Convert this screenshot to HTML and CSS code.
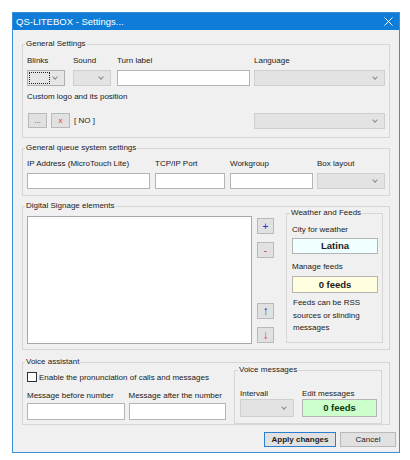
FILE: index.html
```html
<!DOCTYPE html>
<html lang="en">
<head>
    <meta charset="UTF-8">
    <title>QS-LITEBOX - Settings...</title>
    <link rel="stylesheet" href="styles.css">
</head>
<body>
    <div class="window">
        <div class="titlebar">
            <span class="title">QS-LITEBOX - Settings...</span>
            <svg class="close" width="9" height="9" viewBox="0 0 9 9">
                <path d="M0.5 0.5 L8.5 8.5 M8.5 0.5 L0.5 8.5" stroke="#fff" stroke-width="1"/>
            </svg>
        </div>

        <div class="client">
            <fieldset class="group g-general">
                <legend>General Settings</legend>
                <div class="row r-general">
                    <div class="field">
                        <label>Blinks</label>
                        <div class="combo combo-active"><span class="focus"></span></div>
                    </div>
                    <div class="field">
                        <label>Sound</label>
                        <div class="combo"></div>
                    </div>
                    <div class="field">
                        <label>Turn label</label>
                        <div class="textbox"></div>
                    </div>
                    <div class="field">
                        <label>Language</label>
                        <div class="combo"></div>
                    </div>
                </div>
                <div class="caption">Custom logo and its position</div>
                <div class="row r-logo">
                    <button class="btn tiny dots">...</button>
                    <button class="btn tiny red">x</button>
                    <span class="no">[ NO ]</span>
                    <div class="combo logo-pos"></div>
                </div>
            </fieldset>

            <fieldset class="group g-queue">
                <legend>General queue system settings</legend>
                <div class="row r-queue">
                    <div class="field">
                        <label>IP Address (MicroTouch Lite)</label>
                        <div class="textbox"></div>
                    </div>
                    <div class="field">
                        <label>TCP/IP Port</label>
                        <div class="textbox"></div>
                    </div>
                    <div class="field">
                        <label>Workgroup</label>
                        <div class="textbox"></div>
                    </div>
                    <div class="field">
                        <label>Box layout</label>
                        <div class="combo"></div>
                    </div>
                </div>
            </fieldset>

            <fieldset class="group g-signage">
                <legend>Digital Signage elements</legend>
                <div class="r-signage">
                    <div class="listbox"></div>
                    <div class="list-btns">
                        <button class="btn side blue b-add">+</button>
                        <button class="btn side red b-del">-</button>
                        <button class="btn side blue arrow b-up">&#8593;</button>
                        <button class="btn side red arrow b-down">&#8595;</button>
                    </div>
                    <fieldset class="group g-weather">
                        <legend>Weather and Feeds</legend>
                        <div class="w-label first">City for weather</div>
                        <div class="valbox city">Latina</div>
                        <div class="w-label">Manage feeds</div>
                        <div class="valbox feeds">0 feeds</div>
                        <p class="note">Feeds can be RSS sources or slinding messages</p>
                    </fieldset>
                </div>
            </fieldset>

            <fieldset class="group g-voice">
                <legend>Voice assistant</legend>
                <div class="r-voice">
                    <div class="voice-left">
                        <div class="check-row">
                            <span class="checkbox"></span>
                            <span>Enable the pronunciation of calls and messages</span>
                        </div>
                        <div class="row r-msgs">
                            <div class="field">
                                <label>Message before number</label>
                                <div class="textbox tall"></div>
                            </div>
                            <div class="field">
                                <label>Message after the number</label>
                                <div class="textbox tall"></div>
                            </div>
                        </div>
                    </div>
                    <fieldset class="group g-vmsg">
                        <legend>Voice messages</legend>
                        <div class="row r-vmsg">
                            <div class="field">
                                <label>Intervall</label>
                                <div class="combo tall18"></div>
                            </div>
                            <div class="field">
                                <label>Edit messages</label>
                                <div class="valbox green">0 feeds</div>
                            </div>
                        </div>
                    </fieldset>
                </div>
            </fieldset>

            <div class="actions">
                <button class="btn action default">Apply changes</button>
                <button class="btn action">Cancel</button>
            </div>
        </div>
    </div>
</body>
</html>
```

FILE: styles.css
```css
body {
    margin: 0;
    background: #fff;
    font-family: "Liberation Sans", Arial, sans-serif;
    font-size: 8px;
    color: #1a1a1a;
}
.window {
    margin: 12px;
    width: 388px;
    height: 441px;
    box-sizing: border-box;
    border: 1px solid #3a8fd9;
    background: #f0f0f0;
}
.titlebar {
    height: 17px;
    background: #0f7dd8;
    display: flex;
    align-items: center;
    justify-content: space-between;
    padding: 0 6px 0 3px;
}
.title {
    color: #fff;
    font-size: 9.5px;
}
.client {
    padding: 8px 9px 0 9px;
}

/* group boxes */
.group {
    margin: 0;
    padding: 0 4px;
    border: 1px solid #d6d6d6;
    min-width: 0;
}
.group legend {
    padding: 0 1px;
    margin-left: -2px;
    line-height: 12px;
    color: #222;
}
.g-general { padding-bottom: 8px; }
.g-queue { margin-top: 4px; padding-bottom: 6px; }
.g-signage { margin-top: 4px; padding-bottom: 5px; }
.g-voice { margin-top: 6px; padding-bottom: 0; }

.row {
    display: flex;
}
.field {
    display: flex;
    flex-direction: column;
}
.field label {
    line-height: 12px;
    margin-bottom: 3px;
    white-space: nowrap;
}

/* controls */
.textbox {
    height: 16px;
    box-sizing: border-box;
    background: #fff;
    border: 1px solid #b4b4b4;
}
.combo {
    position: relative;
    height: 16px;
    box-sizing: border-box;
    background: #e3e3e3;
    border: 1px solid #cfcfcf;
}
.combo::after {
    content: "";
    position: absolute;
    right: 7px;
    top: 4px;
    width: 3px;
    height: 3px;
    border-right: 1px solid #8a8a8a;
    border-bottom: 1px solid #8a8a8a;
    transform: rotate(45deg);
}
.combo-active {
    background: #e6e6e6;
    border-color: #b0b0b0;
}
.focus {
    display: block;
    margin: 1px 0 0 1px;
    width: 21px;
    height: 12px;
    box-sizing: border-box;
    border: 1px dotted #222;
}
.btn {
    padding: 0;
    font-family: inherit;
    font-size: 8px;
    background: #e1e1e1;
    border: 1px solid #b9b9b9;
    color: #222;
    box-sizing: border-box;
}
.red { color: #e23a3a; }
.blue { color: #2b2bd8; }

/* general settings */
.r-general { margin-top: 5px; }
.r-general .field:nth-child(1) { width: 38px; margin-right: 8px; }
.r-general .field:nth-child(2) { width: 38px; margin-right: 6px; }
.r-general .field:nth-child(3) { width: 133px; margin-right: 4px; }
.r-general .field:nth-child(4) { width: 131px; }
.caption {
    margin-top: 5px;
    line-height: 12px;
}
.r-logo {
    margin-top: 10px;
    align-items: flex-start;
}
.tiny {
    width: 19px;
    height: 15px;
    margin-left: 1px;
    margin-right: 3px;
    line-height: 12px;
}
.tiny.dots { color: #555; }
.no {
    margin-left: 1px;
    line-height: 15px;
}
.logo-pos {
    width: 131px;
    margin-left: auto;
}

/* queue */
.r-queue { margin-top: 4px; }
.r-queue .field:nth-child(1) { width: 123px; margin-right: 5px; }
.r-queue .field:nth-child(2) { width: 70px; margin-right: 5px; }
.r-queue .field:nth-child(3) { width: 83px; margin-right: 4px; }
.r-queue .field:nth-child(4) { width: 68px; }

/* signage */
.r-signage {
    display: flex;
    align-items: flex-start;
}
.listbox {
    width: 225px;
    height: 128px;
    margin-top: 4px;
    box-sizing: border-box;
    background: #fff;
    border: 1px solid #a8a8a8;
}
.list-btns {
    display: flex;
    flex-direction: column;
    margin-left: 5px;
    margin-top: 6px;
}
.side {
    width: 17px;
    height: 16px;
    font-size: 10px;
    line-height: 13px;
}
.side.arrow {
    font-size: 12px;
    line-height: 13px;
}
.b-del, .b-down { margin-top: 8px; }
.b-up { margin-top: 45px; }
.g-weather {
    width: 97px;
    height: 136px;
    box-sizing: border-box;
    margin: -5px 0 0 12px;
    padding: 0 4px 0 5px;
}
.w-label {
    line-height: 12px;
    margin-top: 7px;
}
.w-label.first { margin-top: 5px; }
.valbox {
    box-sizing: border-box;
    border: 1px solid #b4b4b4;
    font-weight: bold;
    font-size: 9.5px;
    text-align: center;
}
.city {
    margin-top: 2px;
    height: 16px;
    line-height: 14px;
    background: #f0ffff;
}
.feeds {
    margin-top: 3px;
    height: 17px;
    line-height: 15px;
    background: #ffffe0;
}
.note {
    margin: 4px 0 0 1px;
    line-height: 12.5px;
}

/* voice */
.r-voice {
    display: flex;
    align-items: flex-start;
}
.voice-left { width: 203px; }
.check-row {
    display: flex;
    align-items: center;
    margin-top: 3px;
    height: 12px;
}
.checkbox {
    width: 10px;
    height: 10px;
    box-sizing: border-box;
    border: 1px solid #333;
    background: #fff;
    margin-right: 2px;
}
.r-msgs { margin-top: 7px; }
.r-msgs label { margin-bottom: 1px; }
.r-msgs .field { width: 99px; margin-right: 4px; }
.tall { height: 17px; }
.g-vmsg {
    width: 148px;
    height: 60px;
    box-sizing: border-box;
    margin: -4px 0 0 4px;
    padding: 0 4px 0 5px;
}
.r-vmsg { margin-top: 13px; }
.r-vmsg label {
    line-height: 10px;
    margin-bottom: 0;
}
.r-vmsg .field:nth-child(1) { width: 54px; margin-right: 8px; }
.r-vmsg .field:nth-child(2) { width: 75px; }
.tall18 { height: 18px; }
.tall18::after { top: 5px; }
.green {
    height: 18px;
    line-height: 16px;
    background: #ccffcc;
    color: #0a3a0a;
}

/* bottom buttons */
.actions {
    display: flex;
    justify-content: flex-end;
    margin: 7px -6px 0 0;
}
.action {
    height: 15px;
    line-height: 12px;
    margin-left: 4px;
}
.default {
    width: 72px;
    font-weight: bold;
    border-color: #2a7fd0;
}
.action:last-child { width: 56px; }
```
